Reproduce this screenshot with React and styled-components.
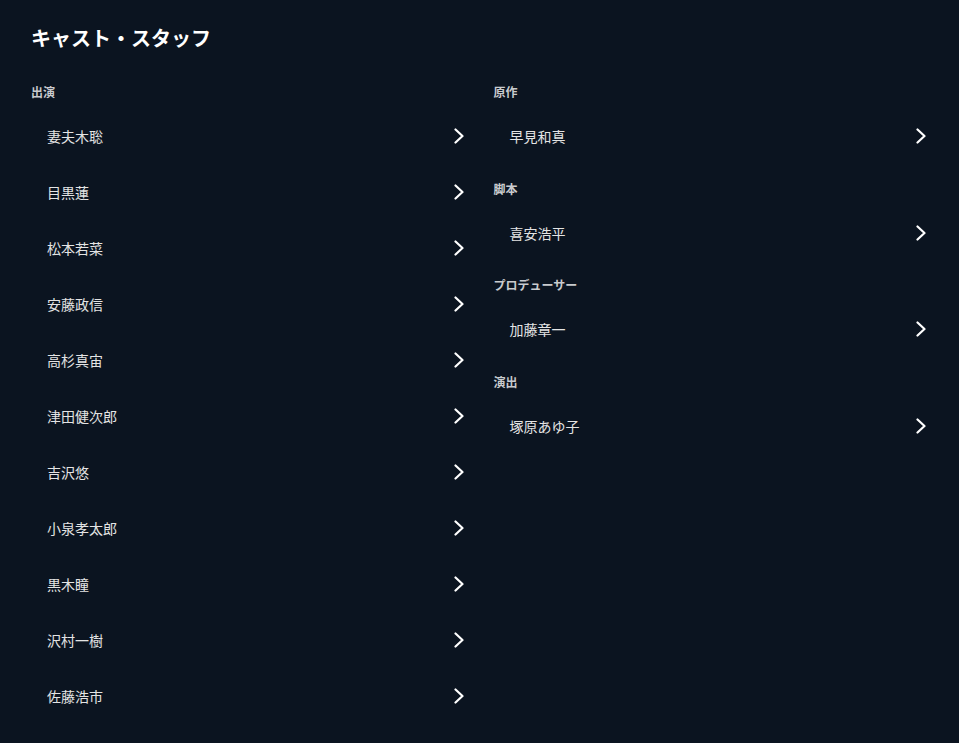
import React from 'react';
import styled, { createGlobalStyle } from 'styled-components';

const cast = [
  '妻夫木聡', '目黒蓮', '松本若菜', '安藤政信', '高杉真宙', '津田健次郎',
  '吉沢悠', '小泉孝太郎', '黒木瞳', '沢村一樹', '佐藤浩市',
];

const staff = [
  { role: '原作', names: ['早見和真'] },
  { role: '脚本', names: ['喜安浩平'] },
  { role: 'プロデューサー', names: ['加藤章一'] },
  { role: '演出', names: ['塚原あゆ子'] },
];

export default function App () {
  return (
    <Page>
      <GlobalStyle/>
      <Title>キャスト・スタッフ</Title>
      <Columns>
        <Column>
          <Section role="出演" names={cast}/>
        </Column>
        <Column>
          {staff.map(s => (
            <Section key={s.role} role={s.role} names={s.names}/>
          ))}
        </Column>
      </Columns>
    </Page>
  );
}

function Section ({ role, names }) {
  return (
    <SectionWrap>
      <Label>{role}</Label>
      {names.map(n => (
        <Row key={n}>
          <Name>{n}</Name>
          <Chevron viewBox="0 0 12 16">
            <path d="M2.5 1.5 L9.5 8 L2.5 14.5" fill="none" stroke="#fff" strokeWidth="2.2" strokeLinecap="round" strokeLinejoin="round"/>
          </Chevron>
        </Row>
      ))}
    </SectionWrap>
  );
}

const GlobalStyle = createGlobalStyle`
  body {
    margin: 0;
    background: #0b1420;
    font-family: "Noto Sans CJK JP", "Noto Sans", sans-serif;
  }
`;

const Page = styled.div`
  min-height: 743px;
  padding: 24px 31px 0;
  box-sizing: border-box;
  background: #0b1420;
  color: #e8e8e8;
`;

const Title = styled.h2`
  margin: 0;
  font-size: 20px;
  line-height: 28px;
  font-weight: 700;
  color: #ffffff;
`;

const Columns = styled.div`
  display: grid;
  grid-template-columns: 1fr 1fr;
  column-gap: 28px;
  margin-top: 32px;
`;

const Column = styled.div`
  display: flex;
  flex-direction: column;
`;

const SectionWrap = styled.div`
  display: flex;
  flex-direction: column;
  & + & {
    margin-top: 16.5px;
  }
`;

const Label = styled.div`
  font-size: 12px;
  line-height: 16px;
  font-weight: 700;
  color: #c9cbce;
  margin-bottom: 8px;
`;

const Row = styled.div`
  height: 56px;
  display: flex;
  align-items: center;
  justify-content: space-between;
  padding: 0 1px 0 16px;
`;

const Name = styled.span`
  font-size: 14px;
  color: #e4e4e4;
`;

const Chevron = styled.svg`
  width: 12px;
  height: 16px;
  flex-shrink: 0;
`;
